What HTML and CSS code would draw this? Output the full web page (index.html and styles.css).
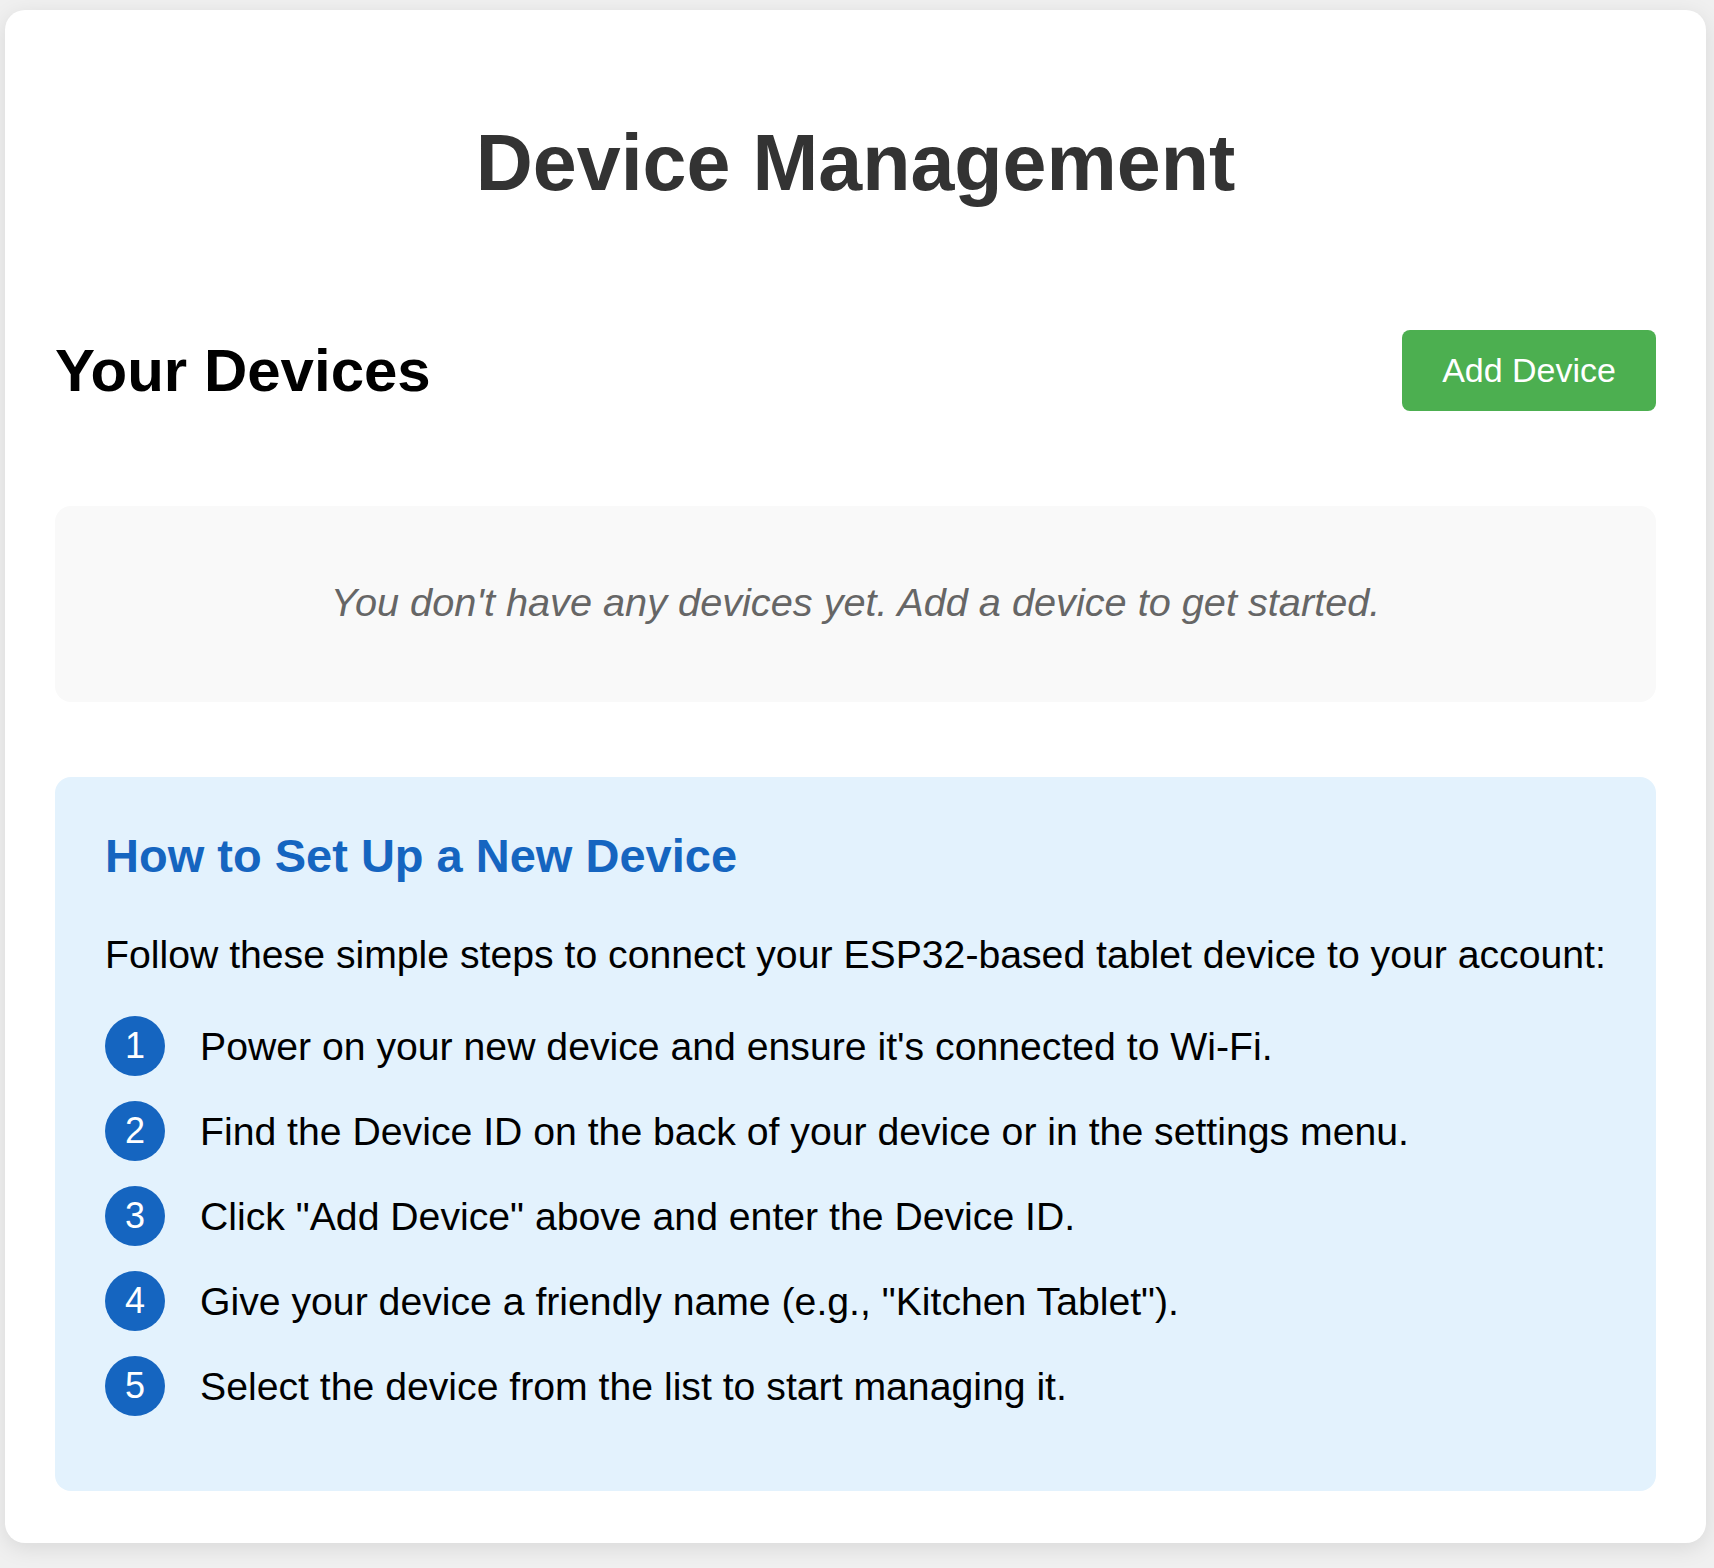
FILE: index.html
```html
<!DOCTYPE html>
<html lang="en">
<head>
<meta charset="utf-8">
<title>Device Management</title>
<link rel="stylesheet" href="styles.css">
</head>
<body>
<main class="card">
  <h1 class="title">Device Management</h1>
  <div class="devices-header">
    <h2 class="devices-title">Your Devices</h2>
    <button class="add-btn" type="button">Add Device</button>
  </div>
  <div class="empty">You don't have any devices yet. Add a device to get started.</div>
  <section class="setup">
    <h3 class="setup-title">How to Set Up a New Device</h3>
    <p class="setup-intro">Follow these simple steps to connect your ESP32-based tablet device to your account:</p>
    <ol class="steps">
      <li class="step"><span class="step-num">1</span><span class="step-text">Power on your new device and ensure it's connected to Wi-Fi.</span></li>
      <li class="step"><span class="step-num">2</span><span class="step-text">Find the Device ID on the back of your device or in the settings menu.</span></li>
      <li class="step"><span class="step-num">3</span><span class="step-text">Click "Add Device" above and enter the Device ID.</span></li>
      <li class="step"><span class="step-num">4</span><span class="step-text">Give your device a friendly name (e.g., "Kitchen Tablet").</span></li>
      <li class="step"><span class="step-num">5</span><span class="step-text">Select the device from the list to start managing it.</span></li>
    </ol>
  </section>
</main>
</body>
</html>
```

FILE: styles.css
```css
html, body {
  margin: 0;
  padding: 0;
}
body {
  background: #f0f0f0;
  font-family: "Liberation Sans", Arial, sans-serif;
  color: #000;
  padding: 10px 8px 24px 5px;
}
.card {
  display: block;
  background: #ffffff;
  border-radius: 20px;
  box-shadow: 0 5px 22px rgba(0, 0, 0, 0.1);
  padding: 50px 50px 52px;
}
.title {
  margin: 58px 0 122px;
  font-size: 79px;
  line-height: 90px;
  font-weight: bold;
  color: #333333;
  text-align: center;
}
.devices-header {
  display: flex;
  align-items: center;
  justify-content: space-between;
  margin-bottom: 95px;
}
.devices-title {
  margin: 0;
  font-size: 60px;
  line-height: 66px;
  font-weight: bold;
  color: #000;
}
.add-btn {
  font-family: "Liberation Sans", Arial, sans-serif;
  font-size: 34px;
  line-height: 39px;
  color: #ffffff;
  background: #4caf50;
  border: none;
  border-radius: 8px;
  padding: 21px 40px;
  cursor: pointer;
}
.empty {
  background: #f9f9f9;
  border-radius: 16px;
  padding: 74px 20px 77px;
  font-size: 39.7px;
  line-height: 45px;
  font-style: italic;
  color: #666666;
  text-align: center;
}
.setup {
  margin-top: 75px;
  background: #e3f2fd;
  border-radius: 16px;
  padding: 52px 50px 50px;
}
.setup-title {
  margin: 0 0 49px;
  font-size: 47px;
  line-height: 54px;
  font-weight: bold;
  color: #1565c0;
}
.setup-intro {
  margin: 0 0 39px;
  font-size: 39.2px;
  line-height: 45px;
  white-space: nowrap;
}
.steps {
  list-style: none;
  margin: 0;
  padding: 0;
}
.step {
  display: flex;
  align-items: center;
  gap: 35px;
  margin-bottom: 25px;
}
.step-num {
  flex: 0 0 60px;
  width: 60px;
  height: 60px;
  border-radius: 50%;
  background: #1565c0;
  color: #ffffff;
  font-size: 36px;
  line-height: 60px;
  text-align: center;
}
.step-text {
  font-size: 39.2px;
  line-height: 45px;
}
```
